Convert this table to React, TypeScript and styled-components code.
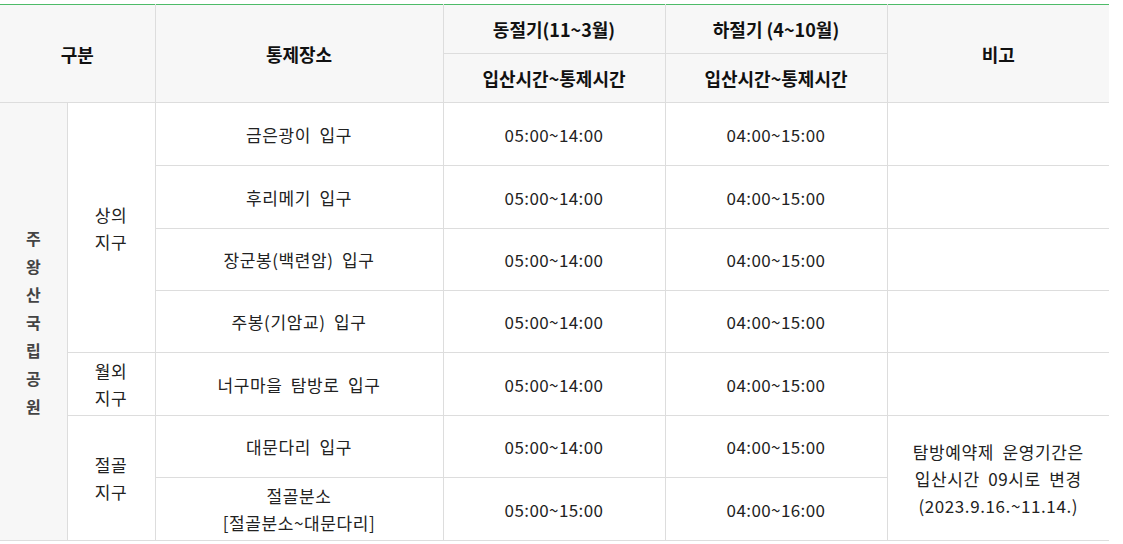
import React from "react";
import styled, { createGlobalStyle } from "styled-components";

const GlobalStyle = createGlobalStyle`
  html, body {
    margin: 0;
    padding: 0;
    background: #fff;
  }
  body {
    font-family: "Noto Sans CJK KR", "Noto Sans", sans-serif;
    color: #222;
  }
`;

const Wrap = styled.div`
  padding-top: 4px;
  width: 1109px;
`;

const Table = styled.table`
  width: 1109px;
  border-collapse: collapse;
  table-layout: fixed;
  border-top: 1px solid #4dbb68;
  font-size: 17px;
`;

const Th = styled.th<{ $last?: boolean }>`
  background: #f7f7f7;
  font-weight: 700;
  font-size: 18px;
  color: #111;
  height: 48px;
  padding: 0;
  text-align: center;
  vertical-align: middle;
  border-bottom: 1px solid #dddddd;
  border-right: ${(p) => (p.$last ? "none" : "1px solid #dddddd")};
`;

const Td = styled.td<{ $last?: boolean; $h?: number }>`
  height: ${(p) => (p.$h ? `${p.$h}px` : "auto")};
  padding: 0;
  text-align: center;
  vertical-align: middle;
  line-height: 27px;
  color: #222;
  letter-spacing: 0.6px;
  word-spacing: 4px;
  border-bottom: 1px solid #dddddd;
  border-right: ${(p) => (p.$last ? "none" : "1px solid #dddddd")};
`;

const TimeCell = styled(Td)`
  letter-spacing: 0.4px;
`;

const ParkCell = styled.td`
  background: #f7f7f7;
  padding: 0;
  text-align: center;
  vertical-align: middle;
  font-weight: 700;
  font-size: 16px;
  color: #444;
  line-height: 28px;
  border-bottom: 1px solid #dddddd;
  border-right: 1px solid #dddddd;
`;

const Line = styled.span`
  display: block;
`;

type Place = {
  name: string[];
  winter: string;
  summer: string;
};

type District = {
  name: string[];
  places: Place[];
};

const districts: District[] = [
  {
    name: ["상의", "지구"],
    places: [
      { name: ["금은광이 입구"], winter: "05:00~14:00", summer: "04:00~15:00" },
      { name: ["후리메기 입구"], winter: "05:00~14:00", summer: "04:00~15:00" },
      { name: ["장군봉(백련암) 입구"], winter: "05:00~14:00", summer: "04:00~15:00" },
      { name: ["주봉(기암교) 입구"], winter: "05:00~14:00", summer: "04:00~15:00" },
    ],
  },
  {
    name: ["월외", "지구"],
    places: [
      { name: ["너구마을 탐방로 입구"], winter: "05:00~14:00", summer: "04:00~15:00" },
    ],
  },
  {
    name: ["절골", "지구"],
    places: [
      { name: ["대문다리 입구"], winter: "05:00~14:00", summer: "04:00~15:00" },
      { name: ["절골분소", "[절골분소~대문다리]"], winter: "05:00~15:00", summer: "04:00~16:00" },
    ],
  },
];

const rowHeights = [62, 62, 61, 61, 62, 61, 62];

const park = ["주", "왕", "산", "국", "립", "공", "원"];
const note = ["탐방예약제 운영기간은", "입산시간 09시로 변경", "(2023.9.16.~11.14.)"];
const totalRows = districts.reduce((n, d) => n + d.places.length, 0);

export default function App() {
  let rowIndex = 0;
  return (
    <Wrap>
      <GlobalStyle />
      <Table>
        <colgroup>
          <col style={{ width: 67 }} />
          <col style={{ width: 88 }} />
          <col style={{ width: 288 }} />
          <col style={{ width: 222 }} />
          <col style={{ width: 222 }} />
          <col style={{ width: 222 }} />
        </colgroup>
        <thead>
          <tr>
            <Th colSpan={2} rowSpan={2}>구분</Th>
            <Th rowSpan={2}>통제장소</Th>
            <Th>동절기(11~3월)</Th>
            <Th>하절기 (4~10월)</Th>
            <Th rowSpan={2} $last>비고</Th>
          </tr>
          <tr>
            <Th>입산시간~통제시간</Th>
            <Th>입산시간~통제시간</Th>
          </tr>
        </thead>
        <tbody>
          {districts.map((d, di) =>
            d.places.map((p, pi) => {
              const idx = rowIndex;
              rowIndex += 1;
              const h = rowHeights[idx];
              return (
                <tr key={`${di}-${pi}`}>
                  {idx === 0 && (
                    <ParkCell rowSpan={totalRows}>
                      {park.map((c) => (
                        <Line key={c}>{c}</Line>
                      ))}
                    </ParkCell>
                  )}
                  {pi === 0 && (
                    <Td rowSpan={d.places.length}>
                      {d.name.map((n) => (
                        <Line key={n}>{n}</Line>
                      ))}
                    </Td>
                  )}
                  <Td $h={h}>
                    {p.name.map((n) => (
                      <Line key={n}>{n}</Line>
                    ))}
                  </Td>
                  <TimeCell $h={h}>{p.winter}</TimeCell>
                  <TimeCell $h={h}>{p.summer}</TimeCell>
                  {di < 2 && <Td $last $h={h} />}
                  {di === 2 && pi === 0 && (
                    <Td $last rowSpan={2}>
                      {note.map((n) => (
                        <Line key={n}>{n}</Line>
                      ))}
                    </Td>
                  )}
                </tr>
              );
            })
          )}
        </tbody>
      </Table>
    </Wrap>
  );
}
